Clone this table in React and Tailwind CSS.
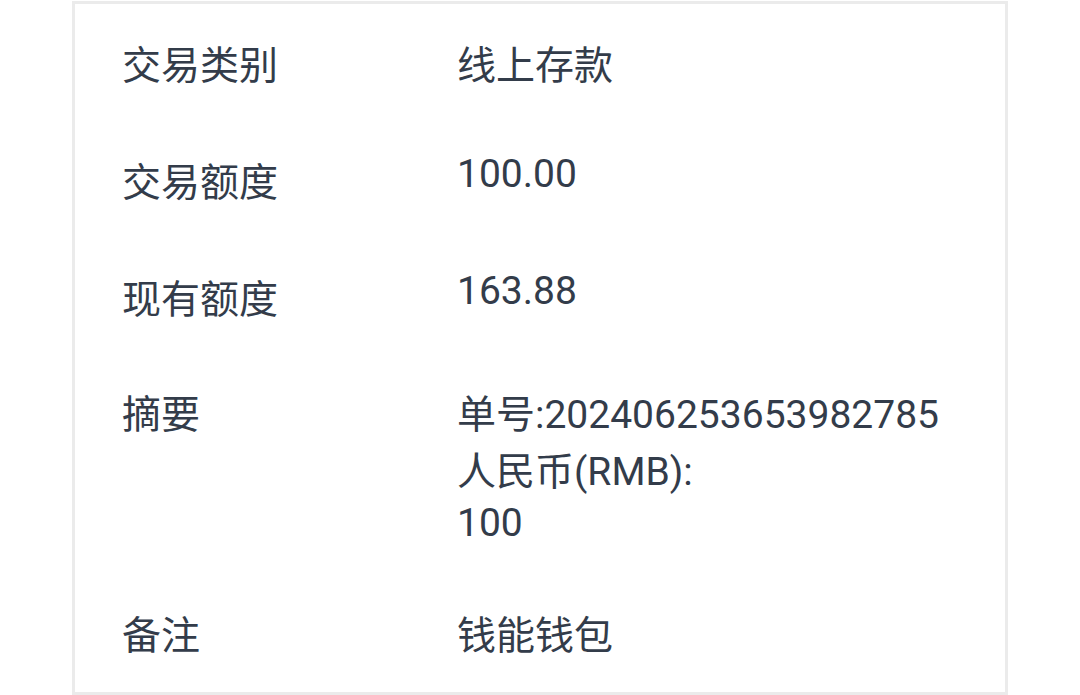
import React from "react";

function App() {
  return (
    <div
      className="min-h-screen bg-white"
      style={{ fontFamily: 'Roboto, "Noto Sans CJK SC", sans-serif' }}
    >
      {/* Card */}
      <div className="ml-[72px] mt-px w-[936px] h-[694px] overflow-hidden border-[3px] border-[#ebebeb] bg-white pl-[47px] pt-[33px] text-[39px] leading-[58px] text-[#333c4a]">
        <div className="flex mb-[59px]">
          <div className="w-[335px] shrink-0">交易类别</div>
          <div className="flex-1">线上存款</div>
        </div>

        <div className="flex mb-[59px]">
          <div className="w-[335px] shrink-0">交易额度</div>
          <div className="flex-1 -mt-[9px]">100.00</div>
        </div>

        <div className="flex mb-[57px]">
          <div className="w-[335px] shrink-0">现有额度</div>
          <div className="flex-1 -mt-[9px]">163.88</div>
        </div>

        <div className="flex mb-[61px]">
          <div className="w-[335px] shrink-0">摘要</div>
          <div className="flex-1">
            <div>单号:202406253653982785</div>
            <div className="leading-[56px]">人民币(RMB):</div>
            <div className="leading-[46px]">100</div>
          </div>
        </div>

        <div className="flex">
          <div className="w-[335px] shrink-0">备注</div>
          <div className="flex-1">钱能钱包</div>
        </div>
      </div>
    </div>
  );
}

export default App;
